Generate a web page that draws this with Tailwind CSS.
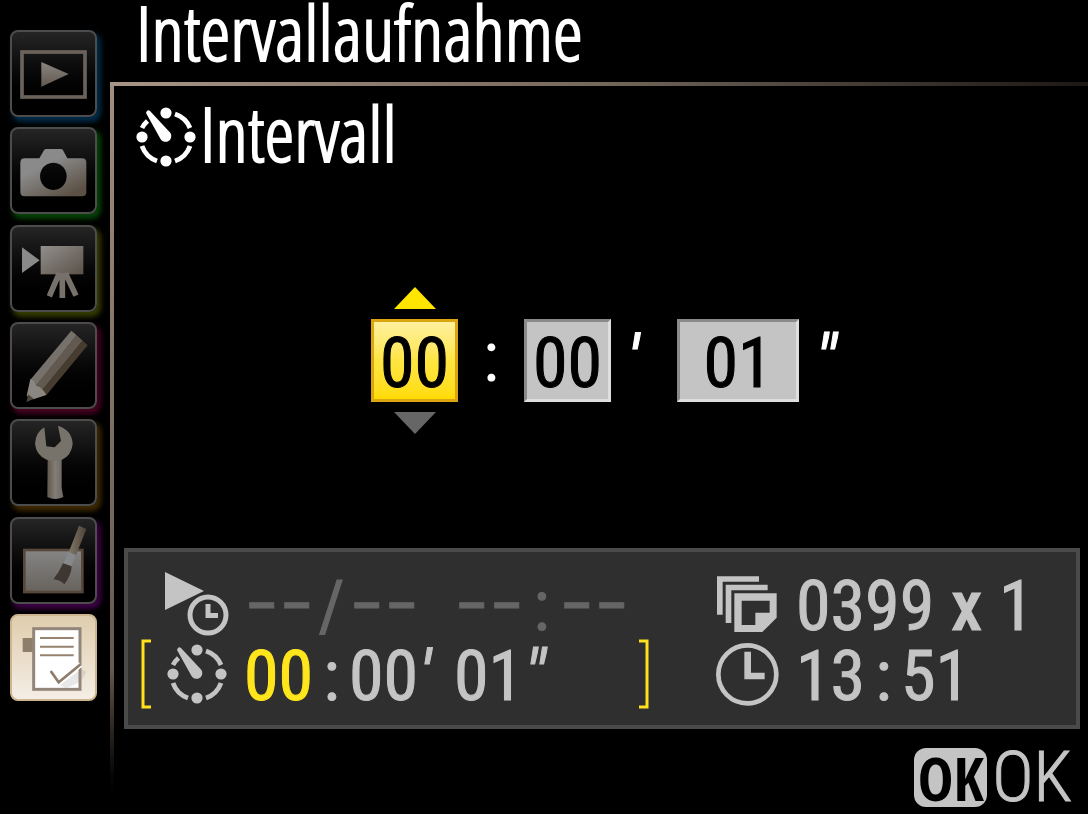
<!DOCTYPE html>
<html lang="de">
<head>
  <meta charset="UTF-8" />
  <meta name="viewport" content="width=device-width, initial-scale=1.0"/>
  <title>Intervallaufnahme</title>
  <script src="https://cdn.jsdelivr.net/npm/@tailwindcss/browser@4"></script>
</head>
<body class="min-h-screen flex bg-black text-white font-['Roboto_Condensed','Open_Sans_Condensed',sans-serif] text-[70px] leading-[70px]">

  <!-- Shared icons -->
  <svg class="hidden">
    <symbol id="timer" viewBox="-30 -30 60 60">
      <g fill="currentColor">
        <circle cx="0" cy="-24" r="5.6"/><circle cx="0" cy="24" r="5.6"/>
        <circle cx="-24" cy="0" r="5.6"/><circle cx="24" cy="0" r="5.6"/>
        <path d="M-20-24 Q-19-28-16-26 L4.500-4 A5.800 5.800 0 1 1-5.500 2 Z"/>
      </g>
      <g fill="none" stroke="currentColor" stroke-width="4.800">
        <path d="M9-23 A24.500 24.500 0 0 1 24-9"/>
        <path d="M24 9 A24.500 24.500 0 0 1 9 24"/>
        <path d="M-9 24 A24.500 24.500 0 0 1-24 9"/>
        <path d="M-24-9 A24.500 24.500 0 0 1-18.500-16"/>
      </g>
    </symbol>
  </svg>

  <!-- Menu tabs -->
  <nav class="w-[110px] shrink-0 pt-[30px] pl-[10px]">
    <div class="h-[671px] flex flex-col justify-between">
      <a href="#" aria-label="Wiedergabe" class="size-[87px] rounded-lg border-2 border-[#4c4c4c] bg-linear-to-b from-[#252525] to-black shadow-[3px_4px_5px_1px_#002b48]">
        <svg viewBox="34 36 249 249" class="size-full">
          <linearGradient id="g1" x2="0" y2="1"><stop stop-color="#8a8580"/><stop offset="1" stop-color="#625950"/></linearGradient>
          <rect x="64" y="96" width="189" height="135" fill="none" stroke="#6b625b" stroke-width="11"/>
          <path d="M122 126 L204 162 L122 200 Z" fill="url(#g1)"/>
        </svg>
      </a>
      <a href="#" aria-label="Aufnahme" class="size-[87px] rounded-lg border-2 border-[#4c4c4c] bg-linear-to-b from-[#252525] to-black shadow-[3px_4px_5px_1px_#064206]">
        <svg viewBox="34 327 249 249" class="size-full">
          <linearGradient id="g2" x2=".7" y2="1"><stop offset=".4" stop-color="#8a8a8a"/><stop offset="1" stop-color="#5c5145"/></linearGradient>
          <path fill="url(#g2)" fill-rule="evenodd" d="M72 415 H116 L130 391 Q132 387 138 387 H180 Q185 387 187 391 L200 415 H244 Q257 415 257 428 V516 Q257 529 244 529 H72 Q59 529 59 516 V428 Q59 415 72 415 Z M158 428 a40 41 0 1 0 .1 0 Z"/>
        </svg>
      </a>
      <a href="#" aria-label="Film" class="size-[87px] rounded-lg border-2 border-[#4c4c4c] bg-linear-to-b from-[#252525] to-black shadow-[3px_4px_5px_1px_#343a02]">
        <svg viewBox="34 34 249 249" class="size-full">
          <linearGradient id="g3" x2="1" y2="1"><stop stop-color="#918f8c"/><stop offset="1" stop-color="#5b5148"/></linearGradient>
          <path d="M64 95 L117 134 L64 172 Z" fill="#8a8a8a"/>
          <rect x="120" y="91" width="128" height="85" fill="url(#g3)"/>
          <path d="M176 172 L146 242 M185 172 V247 M194 172 L226 240" fill="none" stroke="#77716b" stroke-width="17"/>
        </svg>
      </a>
      <a href="#" aria-label="Individualfunktionen" class="size-[87px] rounded-lg border-2 border-[#4c4c4c] bg-linear-to-b from-[#252525] to-black shadow-[3px_4px_5px_1px_#450020]">
        <svg viewBox="34 326 249 249" class="size-full">
          <path d="M212 346 L228 360 L109 510 L89 493 Z" fill="#77716b"/>
          <path d="M228 360 L246 376 L124 526 L106 509 Z" fill="#625a50"/>
          <path d="M246 376 L261 390 L137 540 L122 526 Z" fill="#463c30"/>
          <path d="M89 491 Q100 493 108 511 Q126 517 137 539 L98 552 L78 541 Z" fill="#8a8681"/>
          <path d="M83 537 L99 551 L77 560 Z" fill="#4e453a"/>
        </svg>
      </a>
      <a href="#" aria-label="System" class="size-[87px] rounded-lg border-2 border-[#4c4c4c] bg-linear-to-b from-[#252525] to-black shadow-[3px_4px_5px_1px_#3e2800]">
        <svg viewBox="34 34 249 249" class="size-full">
          <linearGradient id="g5"><stop stop-color="#61574c"/><stop offset=".5" stop-color="#827d77"/><stop offset="1" stop-color="#6a6661"/></linearGradient>
          <path d="M141 140 H183 V235 L188 262 Q163 274 140 262 Z" fill="url(#g5)"/>
          <path d="M131 53 L137 110 L162 113 L181 94 L172 48 Q215 62 216 104 Q212 138 184 150 Q163 157 138 150 Q106 136 103 102 Q105 68 131 53 Z" fill="#77736b"/>
        </svg>
      </a>
      <a href="#" aria-label="Bildbearbeitung" class="size-[87px] rounded-lg border-2 border-[#4c4c4c] bg-linear-to-b from-[#252525] to-black shadow-[3px_4px_5px_1px_#3b0043]">
        <svg viewBox="34 326 249 249" class="size-full">
          <linearGradient id="g6" x2="0" y2="1"><stop stop-color="#858585"/><stop offset="1" stop-color="#67625c"/></linearGradient>
          <linearGradient id="g7"><stop stop-color="#837a6c"/><stop offset="1" stop-color="#4d4437"/></linearGradient>
          <rect x="71" y="419" width="174" height="126" fill="url(#g6)" stroke="#57483c" stroke-width="8"/>
          <path d="M235 346 L257 356 L224 440 L202 431 Z" fill="url(#g7)"/>
          <path d="M203 424 L226 434 L212 468 L188 460 Z" fill="#85898b"/>
          <path d="M187 459 L213 468 Q212 495 191 522 Q178 509 158 507 Q175 487 187 459 Z" fill="#3d3631"/>
        </svg>
      </a>
      <a href="#" aria-label="Mein Menü" aria-current="page" class="size-[87px] rounded-lg border-2 border-[#cdb68f] bg-linear-to-b from-[#dfcdad] to-[#f5eee6]">
        <svg viewBox="34 47 249 249" class="size-full">
          <rect x="66" y="113" width="34" height="42" fill="#8d7d6b"/>
          <rect x="99" y="85" width="139" height="182" fill="#fff" stroke="#94857a" stroke-width="9"/>
          <path d="M118 113 H219 M118 139 H219 M118 165 H219" stroke="#95836f" stroke-width="6"/>
          <path d="M178 254 L242 206 L256 214 Q245 250 195 262 Z" fill="#8883"/>
          <path d="M150 212 L174 246 L240 192" fill="none" stroke="#fff" stroke-width="16"/>
          <path d="M150 212 L174 246 L240 192" fill="none" stroke="#8d7d6b" stroke-width="8"/>
        </svg>
      </a>
    </div>
  </nav>

  <div class="flex-1 flex flex-col">
    <h1 class="h-[82px] pl-[26px] font-['Open_Sans_Condensed_Light','Roboto_Condensed',sans-serif] text-[76px] leading-[64px] [-webkit-text-stroke:2px]">Intervallaufnahme</h1>
    <div class="h-1 bg-linear-to-r from-[#a89586] via-[#75685c] to-[#1c1815]"></div>

    <div class="flex-1 flex">
      <div class="w-1 bg-linear-to-b from-[#a08e80] from-0% via-[#66594f] via-80% to-black"></div>

      <main class="flex-1 flex flex-col pl-[10px] pr-2">
        <h2 class="flex items-center h-[86px] pt-4 pl-3 font-['Open_Sans_Condensed_Light','Roboto_Condensed',sans-serif] text-[76px] [-webkit-text-stroke:2px]">
          <svg class="size-[60px]"><use href="#timer"/></svg>
          <span class="pl-1 pb-2">Intervall</span>
        </h2>

        <!-- Interval picker -->
        <form class="flex items-center pt-[115px] pl-[247px]">
          <div class="flex flex-col items-center gap-[10px]">
            <button type="button" aria-label="Mehr" class="block">
              <svg viewBox="0 0 42 22" class="w-[42px] h-[22px]"><path d="M21 0 L42 22 H0 Z" fill="#ffe600"/></svg>
            </button>
            <input aria-label="Stunden" value="00" class="w-[87px] h-[83px] pt-1 text-center text-black [-webkit-text-stroke:1px] border-[3px] border-[#dba512] bg-linear-to-b from-[#fff09c] via-[#ffe540] to-[#ffdc00]" />
            <button type="button" aria-label="Weniger" class="block">
              <svg viewBox="0 0 42 22" class="w-[42px] h-[22px]"><path d="M0 0 H42 L21 22 Z" fill="#666"/></svg>
            </button>
          </div>
          <span class="w-[66px] pb-2 text-center">:</span>
          <input aria-label="Minuten" value="00" class="w-[87px] h-[83px] pt-1 text-center text-black [-webkit-text-stroke:1px] bg-[#c4c4c4] border-[3px] border-t-[#8a8a8a] border-l-[#8a8a8a] border-b-[#dedede] border-r-[#dedede]" />
          <span class="w-[66px] pl-4 italic [-webkit-text-stroke:1px]">′</span>
          <input aria-label="Sekunden" value="01" class="w-[122px] h-[83px] pt-1 text-center text-black [-webkit-text-stroke:1px] bg-[#c4c4c4] border-[3px] border-t-[#8a8a8a] border-l-[#8a8a8a] border-b-[#dedede] border-r-[#dedede]" />
          <span class="pl-4 italic [-webkit-text-stroke:1px]">″</span>
        </form>

        <!-- Current settings -->
        <section class="mt-[114px] flex h-[181px] border-4 border-[#4a4a4a] bg-[#2f2f2f] pt-[17px] pl-3 text-[#c4c4c4]">
          <div class="w-[576px]">
            <div class="flex items-center h-[70px] pl-[25px]">
              <svg viewBox="0 0 64 64" class="size-16">
                <path d="M0 0 L39 19 L0 38 Z" fill="currentColor"/>
                <circle cx="43" cy="43" r="18" fill="#2f2f2f" stroke="#2f2f2f" stroke-width="9"/>
                <circle cx="43" cy="43" r="18" fill="none" stroke="currentColor" stroke-width="5"/>
                <path d="M43 32 V43.500 H53" fill="none" stroke="currentColor" stroke-width="5"/>
              </svg>
              <div class="flex pt-1 pl-[15px] text-[#666] whitespace-nowrap [-webkit-text-stroke:1px]">
                <span class="w-[70px]">−−</span>
                <span class="w-[35px] text-center">/</span>
                <span class="w-[105px]">−−</span>
                <span class="w-[70px]">−−</span>
                <span class="w-[35px] text-center">:</span>
                <span class="w-[70px]">−−</span>
              </div>
            </div>
            <div class="flex items-center h-[70px]">
              <svg viewBox="0 0 12 70" class="w-3 h-[70px]"><path d="M11 2 H3 V68 H11" fill="none" stroke="#ffe21c" stroke-width="3"/></svg>
              <svg class="size-[60px] ml-[15px]"><use href="#timer"/></svg>
              <div class="flex w-[391px] pt-1 pl-[17px] [-webkit-text-stroke:1px]">
                <span class="w-[70px] text-[#ffe61c]">00</span>
                <span class="w-[35px] text-center">:</span>
                <span class="w-[70px]">00</span>
                <span class="w-[35px] italic">′</span>
                <span class="w-[70px]">01</span>
                <span class="italic">″</span>
              </div>
              <svg viewBox="0 0 12 70" class="w-3 h-[70px] ml-5"><path d="M1 2 H9 V68 H1" fill="none" stroke="#ffe21c" stroke-width="3"/></svg>
            </div>
          </div>
          <div>
            <div class="flex items-center h-[70px] gap-[17px]">
              <svg viewBox="48 98 189 189" class="size-[63px]" fill="currentColor">
                <path d="M51 108 H177 V124 H68 V223 H51 Z"/>
                <path d="M77 133 H203 V150 H94 V248 H77 Z"/>
                <path fill-rule="evenodd" d="M103 159 H230 V232 L187 275 H103 Z M125 181 V254 H166 V217 H209 V181 Z"/>
              </svg>
              <div class="flex pt-1 [-webkit-text-stroke:1px]">
                <span class="w-[138px]">0399</span>
                <span class="w-[65px] text-center font-medium">x</span>
                <span>1</span>
              </div>
            </div>
            <div class="flex items-center h-[70px] gap-[17px]">
              <svg viewBox="46 306 189 189" class="size-[63px]" fill="none" stroke="currentColor">
                <circle cx="140" cy="400" r="87" stroke-width="14"/>
                <path d="M141 332 V405 H192" stroke-width="20"/>
              </svg>
              <div class="flex pt-1 [-webkit-text-stroke:1px]">
                <span class="w-[70px]">13</span>
                <span class="w-[35px] text-center">:</span>
                <span>51</span>
              </div>
            </div>
          </div>
        </section>

        <button type="button" class="flex items-center self-end mt-[13px] pr-2 gap-[5px] text-[#c4c4c4]">
          <span class="w-[73px] h-[59px] rounded-xl bg-[#c4c4c4] text-black text-center font-['Open_Sans_Condensed',sans-serif] text-[60px] leading-[60px] font-bold">OK</span>
          <span class="font-light [-webkit-text-stroke:1px]">OK</span>
        </button>
      </main>
    </div>
  </div>

</body>
</html>
